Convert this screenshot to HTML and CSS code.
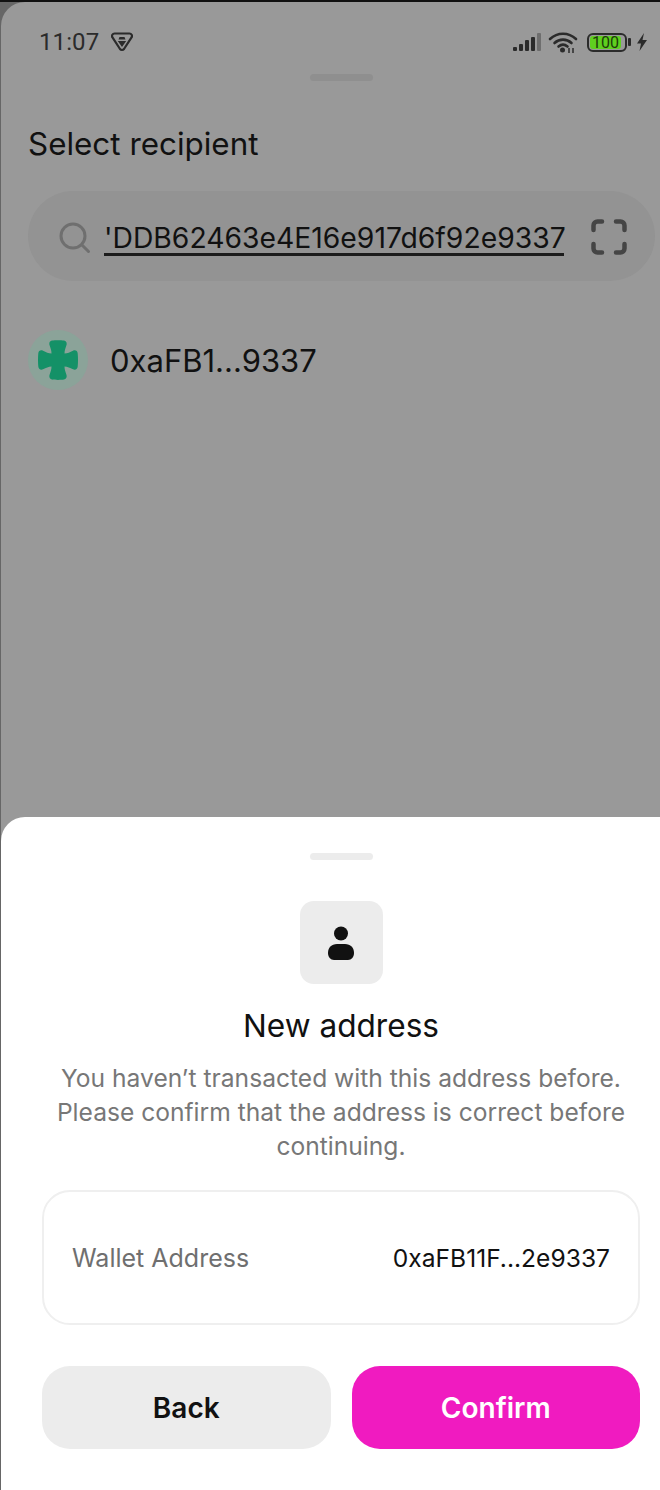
FILE: index.html
```html
<!DOCTYPE html>
<html lang="en">
<head>
    <meta charset="UTF-8">
    <meta name="viewport" content="width=device-width, initial-scale=1.0">
    <title>Select recipient</title>
    <link rel="stylesheet" href="styles.css">
</head>
<body>
    <div class="screen">
        <!-- Dimmed page behind the sheet -->
        <div class="backdrop">
            <div class="status-bar">
                <div class="status-left">
                    <span class="clock">11:07</span>
                    <svg class="vpn-icon" width="22" height="20" viewBox="0 0 22 20">
                        <path d="M3.5 1.5h15a2.5 2.5 0 0 1 2.2 3.7L13 17a2.500 2.500 0 0 1-4 0L1.300 5.200A2.500 2.500 0 0 1 3.500 1.500z" fill="none" stroke="#2b2b2b" stroke-width="2.200" stroke-linejoin="round"/>
                        <path d="M8.500 5h5l1 2.500h-7zM6.800 9h8.400L11 15z" fill="#2b2b2b"/>
                    </svg>
                </div>
                <div class="status-right">
                    <svg class="signal-icon" width="29" height="20" viewBox="0 0 29 20">
                        <rect x="0" y="15" width="4" height="4" rx="1" fill="#2b2b2b"/>
                        <rect x="6" y="12" width="4" height="7" rx="1" fill="#2b2b2b"/>
                        <rect x="12" y="8" width="4" height="11" rx="1" fill="#2b2b2b"/>
                        <rect x="18" y="5" width="4" height="14" rx="1" fill="#2b2b2b"/>
                        <rect x="24" y="1" width="4" height="18" rx="1" fill="#6e6e6e"/>
                    </svg>
                    <svg class="wifi-icon" width="30" height="22" viewBox="0 0 30 22">
                        <path d="M2 8C9.500 1 20.500 1 28 8M6.500 12C11.500 7.500 18.500 7.500 23.500 12M10.500 15.500C13.500 13 16.500 13 19.500 15.500" fill="none" stroke="#2b2b2b" stroke-width="2.600" stroke-linecap="round"/>
                        <circle cx="14.500" cy="19" r="2.500" fill="#2b2b2b"/>
                        <path d="M21 17v5M25 17v5" stroke="#2b2b2b" stroke-width="1.500"/>
                    </svg>
                    <div class="battery">
                        <div class="battery-body"><span class="battery-level">100</span></div>
                        <span class="battery-cap"></span>
                    </div>
                    <svg class="bolt-icon" width="12" height="18" viewBox="0 0 12 18">
                        <path d="M8 0L1 10.500h4L3.500 18 11 7H6.500z" fill="#2b2b2b"/>
                    </svg>
                </div>
            </div>
            <div class="handle handle-dim"></div>
            <h1 class="page-title">Select recipient</h1>
            <div class="search-box">
                <svg class="search-icon" width="32" height="32" viewBox="0 0 32 32">
                    <circle cx="14" cy="14" r="12" fill="none" stroke="#6f6f6f" stroke-width="3"/>
                    <path d="M23 23l6.500 6.500" stroke="#6f6f6f" stroke-width="3" stroke-linecap="round"/>
                </svg>
                <div class="search-value">'DDB62463e4E16e917d6f92e9337</div>
                <svg class="scan-icon" width="36" height="36" viewBox="0 0 36 36">
                    <path d="M2.500 11V6.500a4 4 0 0 1 4-4H11M25 2.500h4.500a4 4 0 0 1 4 4V11M33.500 25v4.500a4 4 0 0 1-4 4H25M11 33.500H6.500a4 4 0 0 1-4-4V25" fill="none" stroke="#454545" stroke-width="4.500" stroke-linecap="round"/>
                </svg>
            </div>
            <div class="recipient-row">
                <div class="avatar">
                    <svg width="40" height="40" viewBox="0 0 40 40">
                        <path d="M14 .5C17 0 23 0 26 .5 28.500 1 29 3 28.500 5 27.500 8 26.500 10.500 26.500 13.500 29.500 13.500 32 12 35 10.700 37.500 9.700 39.500 11 39.700 13.500 40.100 17.500 40.100 22.500 39.700 26.500 39.500 29 37.500 30.300 35 29.300 32 28 29.500 26.500 26.500 26.500 26.500 29.500 27.500 32 28.500 35 29 37 28.500 39 26 39.500 23 40 17 40 14 39.500 11.500 39 11 37 11.500 35 12.500 32 13.500 29.500 13.500 26.500 10.500 26.500 8 28 5 29.300 2.500 30.300 .5 29 .3 26.500-.1 22.500-.1 17.500 .3 13.500 .5 11 2.500 9.700 5 10.700 8 12 10.500 13.500 13.500 13.500 13.500 10.500 12.500 8 11.500 5 11 3 11.500 1 14 .5z" fill="#149167"/>
                    </svg>
                </div>
                <span class="recipient-name">0xaFB1...9337</span>
            </div>
        </div>

        <!-- Confirmation sheet -->
        <div class="sheet">
            <div class="handle handle-light"></div>
            <div class="person-tile">
                <svg width="28" height="34" viewBox="0 0 28 34">
                    <circle cx="14" cy="7.500" r="7" fill="#111"/>
                    <path d="M10 18h8c5.500 0 9 3.500 9 9 0 4-2.500 7-6 7H7c-3.500 0-6-3-6-7 0-5.500 3.500-9 9-9z" fill="#111"/>
                </svg>
            </div>
            <h2 class="sheet-title">New address</h2>
            <p class="sheet-text">You haven’t transacted with this address before. Please confirm that the address is correct before continuing.</p>
            <div class="address-card">
                <span class="address-label">Wallet Address</span>
                <span class="address-value">0xaFB11F...2e9337</span>
            </div>
            <div class="button-row">
                <button type="button" class="btn btn-back">Back</button>
                <button type="button" class="btn btn-confirm">Confirm</button>
            </div>
        </div>
    </div>
</body>
</html>
```

FILE: styles.css
```css
body {
    font-family: Inter, "Liberation Sans", sans-serif;
    margin: 0;
    background: #000;
}
.screen {
    width: 660px;
    height: 1490px;
    display: flex;
    flex-direction: column;
    overflow: hidden;
    background: #666;
    border-top: 2px solid #111;
    padding-left: 1px;
    box-sizing: border-box;
}
.backdrop {
    height: 840px;
    flex: none;
    background: #999;
    border-top-left-radius: 24px;
    color: #111;
}
.status-bar {
    display: flex;
    justify-content: space-between;
    align-items: center;
    height: 26px;
    margin-top: 27px;
    padding: 0 12px 0 38px;
}
.status-left {
    display: flex;
    align-items: center;
    gap: 12px;
}
.clock {
    font-family: Roboto, sans-serif;
    font-size: 24px;
    letter-spacing: 0.1px;
    color: #2b2b2b;
}
.status-right {
    display: flex;
    align-items: center;
    gap: 8px;
}
.signal-icon {
    margin-right: -2px;
}
.wifi-icon {
    margin-right: 1px;
}
.battery {
    display: flex;
    align-items: center;
    gap: 1px;
}
.battery-body {
    width: 40px;
    height: 19px;
    box-sizing: border-box;
    border: 2px solid #2b2b2b;
    border-radius: 6px;
    display: flex;
    padding: 1px 4px 1px 1px;
}
.battery-level {
    flex: 1;
    background: #5fd01f;
    border-radius: 3px;
    font-family: Roboto, sans-serif;
    font-size: 16px;
    line-height: 13px;
    text-align: center;
    color: #1c3b0a;
}
.battery-cap {
    width: 3px;
    height: 8px;
    background: #2b2b2b;
    border-radius: 1px;
}
.bolt-icon {
    margin-left: -3px;
}
.handle {
    width: 63px;
    height: 7px;
    border-radius: 4px;
}
.handle-dim {
    background: #8f8f8f;
    margin: 19px 0 0 309px;
}
.handle-light {
    background: #ececec;
}
.page-title {
    font-size: 31.4px;
    font-weight: 400;
    line-height: 40px;
    margin: 43px 0 0 27px;
}
.search-box {
    display: flex;
    align-items: center;
    height: 90px;
    margin: 27px 5px 0 27px;
    padding: 0 26px 0 31px;
    border-radius: 45px;
    background: #939393;
}
.search-icon {
    flex: none;
    margin: 3px 13px 0 0;
}
.search-value {
    width: 460px;
    flex: none;
    font-size: 28.3px;
    line-height: 30px;
    padding-top: 7px;
    border-bottom: 3px solid #1c1c1c;
    white-space: nowrap;
}
.scan-icon {
    flex: none;
    margin: 2px 0 0 27px;
}
.recipient-row {
    display: flex;
    align-items: center;
    gap: 22px;
    margin: 49px 0 0 27px;
}
.avatar {
    width: 60px;
    height: 60px;
    border-radius: 50%;
    background: #8ba399;
    display: flex;
    align-items: center;
    justify-content: center;
}
.recipient-name {
    font-size: 31px;
}
.sheet {
    flex: none;
    height: 673px;
    margin-top: -25px;
    background: #fff;
    border-top-left-radius: 24px;
    display: flex;
    flex-direction: column;
    align-items: center;
    padding: 36px 20px 0 41px;
    box-sizing: border-box;
}
.person-tile {
    width: 83px;
    height: 83px;
    border-radius: 14px;
    background: #ececec;
    display: flex;
    align-items: center;
    justify-content: center;
    margin-top: 41px;
}
.sheet-title {
    font-size: 31.6px;
    font-weight: 400;
    line-height: 40px;
    margin: 22px 0 0;
    color: #111;
}
.sheet-text {
    width: 598px;
    margin: 15px 0 0;
    font-size: 24.6px;
    line-height: 34px;
    color: #777;
    text-align: center;
}
.address-card {
    width: 100%;
    height: 135px;
    box-sizing: border-box;
    display: flex;
    justify-content: space-between;
    align-items: center;
    padding: 0 28px 0 28px;
    margin-top: 27px;
    border: 2px solid #efefef;
    border-radius: 28px;
}
.address-label {
    font-size: 25px;
    color: #6f6f6f;
}
.address-value {
    font-size: 24.6px;
    color: #111;
}
.button-row {
    width: 100%;
    display: flex;
    gap: 21px;
    margin-top: 41px;
}
.btn {
    flex: 1;
    height: 83px;
    border: none;
    border-radius: 28px;
    font-family: inherit;
    font-size: 28px;
    font-weight: 600;
}
.btn-back {
    background: #ececec;
    color: #111;
}
.btn-confirm {
    background: #f01bc0;
    color: #fff;
}
```
